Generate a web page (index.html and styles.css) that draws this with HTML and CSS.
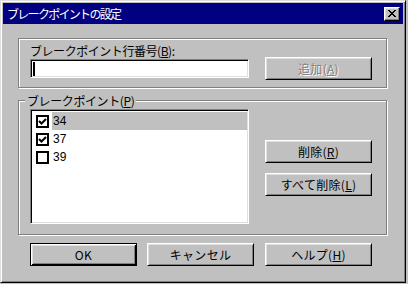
FILE: index.html
```html
<!DOCTYPE html>
<html lang="ja">
<head>
<meta charset="utf-8">
<title>ブレークポイントの設定</title>
<link rel="stylesheet" href="styles.css">
</head>
<body>
<div class="window">
  <div class="titlebar">
    <span class="title">ブレークポイントの設定</span>
    <span class="close"><svg width="8" height="7" viewBox="0 0 8 7"><path d="M0 0h2v1h1v1h2V1h1V0h2v1H7v1H6v1H5v1h1v1h1v1h1v1H6V6H5V5H3v1H2v1H0V6h1V5h1V4h1V3H2V2H1V1H0z" fill="#000"/></svg></span>
  </div>
  <div class="body">
    <div class="group group-line">
      <div class="label">ブレークポイント行番号(<u>B</u>):</div>
      <div class="row">
        <div class="textbox"><span class="caret"></span></div>
        <button class="btn disabled">追加(<u>A</u>)</button>
      </div>
    </div>
    <div class="group group-bp">
      <div class="legend">ブレークポイント(<u>P</u>)</div>
      <div class="row2">
        <div class="listbox">
          <div class="item">
            <span class="check"><svg width="9" height="9" viewBox="0 0 9 9"><path d="M1 4l2.5 2.5L8 2" fill="none" stroke="#000" stroke-width="2.1"/></svg></span>
            <span class="num selected">34</span>
          </div>
          <div class="item">
            <span class="check"><svg width="9" height="9" viewBox="0 0 9 9"><path d="M1 4l2.5 2.5L8 2" fill="none" stroke="#000" stroke-width="2.1"/></svg></span>
            <span class="num">37</span>
          </div>
          <div class="item">
            <span class="check"></span>
            <span class="num">39</span>
          </div>
        </div>
        <div class="side">
          <button class="btn">削除(<u>R</u>)</button>
          <button class="btn">すべて削除(<u>L</u>)</button>
        </div>
      </div>
    </div>
    <div class="footer">
      <button class="btn default">OK</button>
      <button class="btn">キャンセル</button>
      <button class="btn help">ヘルプ(<u>H</u>)</button>
    </div>
  </div>
</div>
</body>
</html>
```
FILE: styles.css
```css
* { box-sizing: border-box; }

body {
  margin: 0;
  background: #c0c0c0;
}

.window {
  width: 406px;
  height: 283px;
  border: 1px solid;
  border-color: #dfdfdf #000 #000 #dfdfdf;
  box-shadow: inset 1px 1px #fff, inset -1px -1px #808080;
  padding: 2px;
  background: #c0c0c0;
  font: 12px/13px "Noto Sans CJK JP", sans-serif;
  color: #000;
  display: flex;
  flex-direction: column;
}

.titlebar {
  height: 21px;
  flex: none;
  background: #000080;
  color: #fff;
  display: flex;
  align-items: center;
  justify-content: space-between;
  padding: 0 3px 0 4px;
}

.title {
  font-size: 12px;
  letter-spacing: -1.7px;
}

.close {
  width: 16px;
  height: 14px;
  background: #c0c0c0;
  border: 1px solid;
  border-color: #fff #000 #000 #fff;
  box-shadow: inset -1px -1px #808080, inset 1px 1px #dfdfdf;
  display: flex;
  align-items: center;
  justify-content: center;
}

.close svg { display: block; }

.body {
  padding: 14px 16px 0 15px;
  display: flex;
  flex-direction: column;
}

.group {
  border: 1px solid #808080;
  box-shadow: inset 1px 1px #fff, 1px 1px #fff;
}

.group-line {
  height: 50px;
  padding: 5px 0 7px 11px;
}

.label {
  height: 13px;
  letter-spacing: -0.45px;
}

u { text-decoration: underline; text-underline-offset: 1px; }

.row {
  display: flex;
  align-items: center;
  height: 23px;
}

.textbox {
  width: 219px;
  height: 19px;
  background: #fff;
  border: 1px solid;
  border-color: #808080 #fff #fff #808080;
  box-shadow: inset 1px 1px #000, inset -1px -1px #dfdfdf;
  padding: 2px 0 0 2px;
}

.caret {
  display: block;
  width: 2px;
  height: 14px;
  background: #000;
}

.btn {
  width: 107px;
  height: 23px;
  margin: 0;
  padding: 0;
  font: inherit;
  color: #000;
  background: #c0c0c0;
  border: 1px solid;
  border-color: #fff #000 #000 #fff;
  box-shadow: inset 1px 1px #dfdfdf, inset -1px -1px #808080;
  display: flex;
  align-items: center;
  justify-content: center;
  letter-spacing: 0.3px;
}

.row .btn { margin-left: 16px; }

.btn.disabled {
  color: #808080;
  text-shadow: 1px 1px 0 #fff;
}

.btn.default {
  border-color: #000;
  box-shadow: inset 1px 1px #fff, inset -1px -1px #000, inset 2px 2px #dfdfdf, inset -2px -2px #808080;
}

.group-bp {
  margin-top: 12px;
  height: 135px;
  padding: 0 0 10px 11px;
  display: flex;
  flex-direction: column;
}

.legend {
  align-self: flex-start;
  height: 13px;
  margin: -7px 0 0 -5px;
  padding: 0 2px;
  background: #c0c0c0;
  letter-spacing: -0.4px;
}

.row2 {
  display: flex;
  margin-top: 2px;
}

.listbox {
  width: 219px;
  height: 115px;
  background: #fff;
  border: 1px solid;
  border-color: #808080 #fff #fff #808080;
  box-shadow: inset 1px 1px #000, inset -1px -1px #dfdfdf;
  padding: 2px 1px 1px 1px;
}

.item {
  height: 18px;
  display: flex;
  align-items: center;
  padding-left: 4px;
}

.check {
  width: 13px;
  height: 13px;
  border: 2px solid #000;
  background: #fff;
  display: flex;
  align-items: center;
  justify-content: center;
}

.check svg { display: block; }

.num {
  flex: 1;
  height: 18px;
  margin-left: 3px;
  padding-left: 1px;
  font: 12px/18px "Liberation Sans", Arial, sans-serif;
}

.num.selected { background: #c0c0c0; }

.side {
  display: flex;
  flex-direction: column;
  gap: 10px;
  margin-left: 16px;
  padding-top: 31px;
}

.footer {
  display: flex;
  gap: 10px;
  margin: 8px 0 0 12px;
}

.footer .help { margin-left: 1px; }
```
